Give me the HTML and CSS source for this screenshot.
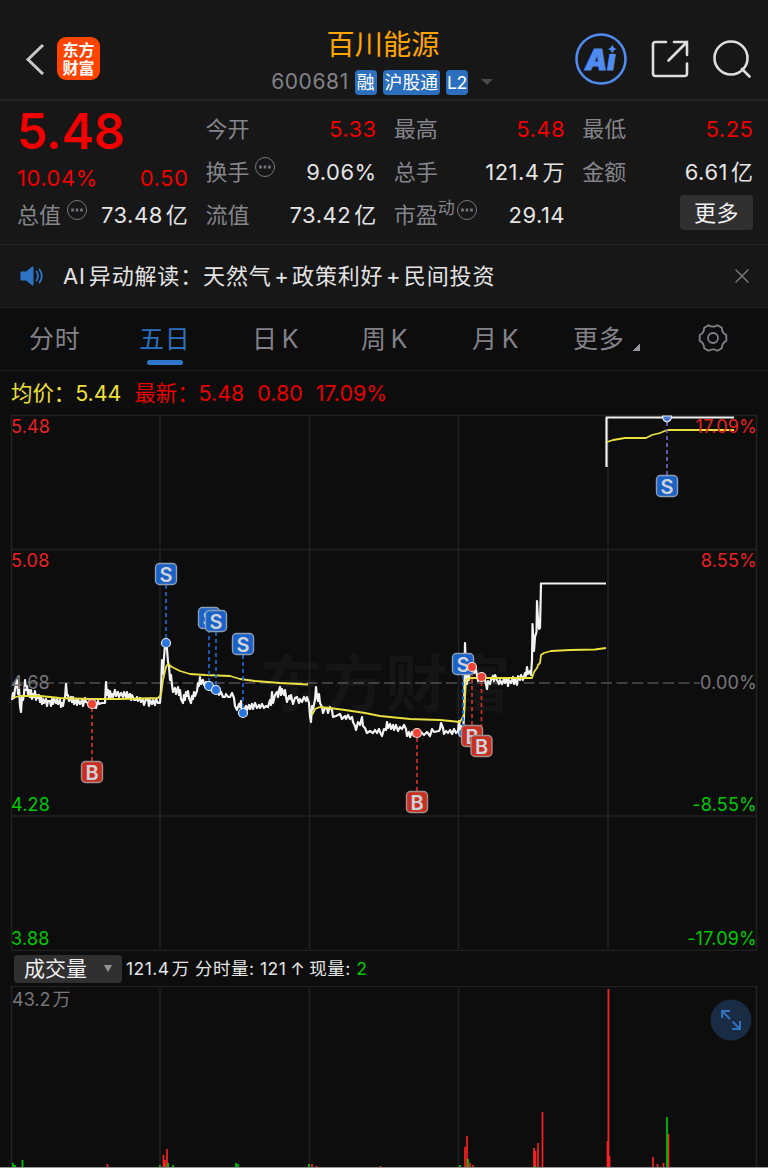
FILE: index.html
```html
<!DOCTYPE html>
<html lang="zh-Hans">
<head>
    <meta charset="UTF-8">
    <meta name="viewport" content="width=device-width, initial-scale=1.0">
    <title>百川能源 600681</title>
    <link rel="stylesheet" href="styles.css">
</head>
<body>
    <header>
        <div class="nav-left">
            <svg class="back" width="20" height="32" viewBox="0 0 20 32"><path d="M18 2 3 16.500 18 31"/></svg>
            <div class="logo"><span>东方</span><span>财富</span></div>
        </div>
        <div class="title">
            <h1>百川能源</h1>
            <div class="code">
                <span class="number">600681</span>
                <span class="tag">融</span>
                <span class="tag">沪股通</span>
                <span class="tag tag-l2">L2</span>
                <i class="caret"></i>
            </div>
        </div>
        <div class="nav-right">
            <svg width="52" height="52" viewBox="0 0 52 52">
                <circle cx="26" cy="26" r="24.500" fill="none" stroke="#508cf0" stroke-width="2.600"/>
                <text class="ai" x="10" y="36.500">Ai</text>
                <path d="M33 13h9v7.800h-9z" fill="#171717"/>
                <path d="M37.300 11.500q.9 3.800 4.700 4.500-3.800.8-4.700 4.600-.9-3.800-4.700-4.600 3.800-.7 4.700-4.500z" fill="#508cf0"/>
            </svg>
            <svg class="line-icon" width="38" height="38" viewBox="0 0 38 38"><path d="M15 2H4.500Q2 2 2 4.500v29Q2 36 4.500 36h29q2.500 0 2.500-2.500V23.500M23 2h13v13M36 2 17.500 20.500"/></svg>
            <svg class="line-icon" width="38" height="38" viewBox="0 0 38 38"><circle cx="18" cy="18" r="16.500"/><path d="M29 29l7.500 7.500"/></svg>
        </div>
    </header>

    <section class="quote">
        <div class="column">
            <strong class="price">5.48</strong>
            <div class="row change"><span>10.04%</span><span>0.50</span></div>
            <div class="row"><label>总值<i class="more-dot"></i></label><span>73.48<b>亿</b></span></div>
        </div>
        <div class="column">
            <div class="row"><label>今开</label><span class="up">5.33</span></div>
            <div class="row"><label>换手<i class="more-dot"></i></label><span>9.06%</span></div>
            <div class="row"><label>流值</label><span>73.42<b>亿</b></span></div>
        </div>
        <div class="column">
            <div class="row"><label>最高</label><span class="up">5.48</span></div>
            <div class="row"><label>总手</label><span>121.4<b>万</b></span></div>
            <div class="row"><label>市盈<sup>动</sup><i class="more-dot tight"></i></label><span>29.14</span></div>
        </div>
        <div class="column">
            <div class="row"><label>最低</label><span class="up">5.25</span></div>
            <div class="row"><label>金额</label><span>6.61<b>亿</b></span></div>
            <div class="row last"><button class="more-button">更多</button></div>
        </div>
    </section>

    <section class="notice">
        <svg width="24" height="20" viewBox="0 0 24 20">
            <path d="M1.500 5.500H6L12 .8q1.500-.8 1.500 1v16.400q0 1.800-1.500 1L6 14.500H1.500Q.5 14.500.5 13.500v-7q0-1 1-1z" fill="#2f74c4"/>
            <path d="M16.500 5.500q3 4.500 0 9M19.500 3.500q4.500 6.500 0 13" fill="none" stroke="#2f74c4" stroke-width="1.800" stroke-linecap="round"/>
        </svg>
        <p>AI<b>异动解读：</b>天然气<em>+</em>政策利好<em>+</em>民间投资</p>
        <svg class="close" width="14" height="14" viewBox="0 0 14 14"><path d="M.5.5l13 13M13.500.5l-13 13"/></svg>
    </section>

    <nav class="tabs">
        <a>分时</a>
        <a class="active">五日</a>
        <a>日<span>K</span></a>
        <a>周<span>K</span></a>
        <a>月<span>K</span></a>
        <a class="more">更多<i></i></a>
        <svg width="30" height="30" viewBox="0 0 30 30">
            <path d="M10.500 2.200c3 2 6 2 9 0l4.300 2.500c.1 3.500 1.400 6 4.500 7.400v5.800c-3.100 1.400-4.400 3.900-4.500 7.400l-4.300 2.500c-3-2-6-2-9 0l-4.300-2.500c-.1-3.500-1.400-6-4.500-7.400v-5.800c3.100-1.400 4.400-3.900 4.500-7.400z"/>
            <circle cx="15" cy="15" r="5"/>
        </svg>
    </nav>

    <div class="legend">
        <span class="average">均价：<b>5.44</b></span>
        <span class="latest">最新：<b>5.48</b><b>0.80</b><b>17.09%</b></span>
    </div>

    <svg class="chart" width="768" height="537" viewBox="0 414 768 537">
        <defs>
            <g id="sell"><rect x="-10.500" y="-10.500" width="21" height="21" rx="4" fill="#1a62c8" stroke="#8d9db4" stroke-width="1.400"/><text class="mark" y="7.500">S</text></g>
            <g id="buy"><rect x="-10.500" y="-10.500" width="21" height="21" rx="4" fill="#c83023" stroke="#a48e8b" stroke-width="1.400"/><text class="mark" y="7.500">B</text></g>
            <circle id="sell-dot" r="4.500" fill="#2b75df" stroke="#e4ecf8" stroke-width="1.200"/>
            <circle id="buy-dot" r="4.500" fill="#ee4232" stroke="#f8dddd" stroke-width="1.200"/>
        </defs>
        <text class="watermark" x="260" y="707">东方财富</text>
        <g class="grid">
            <path d="M11.500 415.500H756.500V950.500H11.500zM11 549.500H757M11 816H757"/>
            <path d="M160 417V949M309.500 417V949M458.500 417V949M608 417V949"/>
        </g>
        <path class="zero" d="M12 683H700"/>

        <path class="price-line" d="M12 700 13 693 14 698 15 689 17 680 18 694 19 688 20 706 21 712 22 697 23 700 24 694 25 680 26 690 27 686 28 694 29 690 30 697 31 690 32 699 33 694 34 697 35 691 36 700 37 695 38 698 39 695 40 702 41 697 42 704 43 699 44 703 46 699 47 706 48 701 50 701 51 706 52 699 53 704 54 699 56 703 57 698 58 704 60 700 61 707 62 703 63 706 64 700 65 698 66 684 67 695 68 695 69 701 71 697 72 702 73 697 74 704 76 700 77 705 78 699 79 702 80 704 82 700 83 706 84 702 85 698 86 702 88 703 92 704 94 707 96 708 97 704 98 701 99 704 102 703 105 703 106 682 107 695 108 690 109 699 110 691 111 697 112 694 113 697 114 693 115 690 116 696 118 692 119 697 121 693 123 697 124 692 126 697 127 692 128 698 130 694 131 700 132 695 134 700 136 700 137 697 138 701 140 698 141 702 143 700 144 705 146 699 148 700 149 706 150 700 152 704 153 700 155 705 156 699 158 703 160 703 161 690 162 660 163 674 164 658 165 645 166 641 167 649 168 662 169 666 170 680 171 675 172 685 173 692 175 688 176 694 178 687 179 695 180 690 181 699 183 703 184 695 185 700 186 692 187 696 188 691 189 698 191 703 192 696 193 699 194 692 195 696 197 691 198 683 199 686 200 677 201 684 203 680 204 685 206 682 207 687 209 685 211 690 213 687 215 691 217 689 219 695 221 692 223 697 225 697 226 694 228 697 230 697 232 693 234 698 235 706 237 710 239 704 240 707 241 701 242 712 244 710 246 706 247 710 249 705 250 709 252 704 253 709 255 703 257 708 259 705 260 708 262 704 264 708 266 706 268 707 270 700 271 705 272 692 273 703 275 695 277 692 278 697 279 690 280 687 281 695 282 689 284 695 285 690 286 697 287 702 289 696 290 699 291 695 292 700 293 704 295 698 297 697 299 703 300 699 302 702 304 697 306 701 307 697 309 703 310 716 311 722 312 706 313 709 315 700 316 687 317 696 318 701 319 694 320 703 322 707 323 713 325 708 327 708 328 713 330 707 332 710 333 717 336 716 340 714 342 719 345 716 346 719 348 715 350 719 352 717 353 722 355 726 356 730 358 722 360 725 362 717 363 726 365 728 367 733 370 731 373 733 375 730 377 733 379 729 380 732 382 736 384 729 386 730 387 722 388 728 390 724 391 729 393 725 394 730 396 725 398 731 400 727 402 729 404 725 406 729 407 736 409 732 410 737 412 732 414 736 416 733 419 736 421 732 424 735 427 732 430 736 432 729 434 732 439 731 440 729 441 723 443 728 444 734 446 731 448 733 450 730 452 734 454 729 456 733 458 731 459 721 460 729 461 726 463 734 464 715 465 643 466 670 467 684 468 670 469 680 470 665 472 667 474 673 476 670 478 681 480 677 482 680 484 676 486 684 487 689 488 681 490 684 491 680 493 676 494 681 495 675 497 680 499 684 500 680 502 684 504 679 505 683 507 678 508 686 509 680 511 683 513 677 514 684 515 679 517 685 518 676 520 680 521 675 523 680 525 673 526 676 527 667 528 674 530 671 531 675 532 660 532.500 624 534 651 535 637 536.500 632 537 601 538 620 539 629 540 628 541 583.500 606 583.500M606.500 467V417.500H734"/>
        <path class="avg" d="M12 698 20 696 40 696 60 698 90 699 120 699 158 698 161 695 163 680 166 667 168 664 172 667 180 671 190 674 205 675 230 676 240 679 255 681 280 683 308 684.500M312 715 315 709 320 707 330 708 345 710 365 713 380 716 410 719 440 720 460 722 464 715 466 680 470 678 500 678 532 678 534 672 537 668 538 665 540 663 541 655 544 653 551 651 570 650 595 649.500 606 648M607 442 613 440 625 438 646 438 652 435 660 433 667 430 734 430"/>

        <g class="sell-lines"><path d="M166 585V638M209 629V682M216 632V686M243 655V709M463 675V729"/><path d="M667 422V475" stroke="#7866c0"/></g>
        <path class="buy-lines" d="M92 708V761M417 738V791M472 672V726M481.500 682V735"/>
        <use href="#sell-dot" x="166" y="643"/><use href="#sell-dot" x="209" y="686"/><use href="#sell-dot" x="216" y="690"/><use href="#sell-dot" x="243" y="713"/>
        <use href="#sell-dot" x="463" y="733"/><path d="M662.500 416h9q0 5-4.500 6-4.500-1-4.500-6z" fill="#5078d0" stroke="#e4ecf8" stroke-width="1.200"/>
        <use href="#buy-dot" x="92" y="704"/><use href="#buy-dot" x="417" y="733"/>
        <use href="#sell" x="166" y="574"/><use href="#sell" x="209" y="618"/><use href="#sell" x="216" y="621"/><use href="#sell" x="243" y="644"/><use href="#sell" x="463" y="664"/><use href="#sell" x="667" y="486"/>
        <use href="#buy-dot" x="472" y="667"/><use href="#buy-dot" x="481.500" y="677"/>
        <use href="#buy" x="92" y="772"/><use href="#buy" x="417" y="802"/><use href="#buy" x="472" y="736"/><use href="#buy" x="481.500" y="746"/>

        <g class="axis">
            <text x="11" y="433" class="up">5.48</text>
            <text x="11" y="567" class="up">5.08</text>
            <text x="11" y="689">4.68</text>
            <text x="11" y="811" class="down">4.28</text>
            <text x="11" y="945" class="down">3.88</text>
        </g>
        <g class="axis right">
            <text x="757" y="433" class="up">17.09%</text>
            <text x="757" y="567" class="up">8.55%</text>
            <text x="757" y="689">0.00%</text>
            <text x="757" y="811" class="down">-8.55%</text>
            <text x="757" y="945" class="down">-17.09%</text>
        </g>
    </svg>

    <div class="volume-bar">
        <button>成交量<i></i></button>
        <p>121.4<b>万</b> 分时量: 121<b class="arrow">↑</b>现量: <span class="down">2</span></p>
    </div>

    <svg class="volume" width="768" height="182" viewBox="0 986 768 182">
        <g class="grid">
            <path d="M11.500 1168V986.500H756.500V1168"/>
            <path d="M160 989V1168M309.500 989V1168M458.500 989V1168M608 989V1168"/>
        </g>
        <path class="bars-up" d="M107.500 1168v-4M163.500 1168v-13M165 1168v-8M167 1168v-19M312 1168v-4M316.500 1168v-2M380.500 1168v-2M465 1168v-21M467 1168v-32M470 1168v-5M473 1168v-3M534 1168v-20M535.500 1168v-17M538 1168v-25M542.500 1168v-56M608.500 1168V989M609.500 1168v-12M607.500 1168v-27M653 1168v-11M657.500 1168v-4M663.500 1168v-5M668.500 1168v-34"/>
        <path class="bars-down" d="M13 1168v-5M15 1168v-3M22.500 1168v-8M160 1168v-3M168 1168v-5M173 1168v-3M236 1168v-5M238 1168v-4M309 1168v-4M460 1168v-3M468 1168v-9M535 1168v-2M667 1168v-51"/>
        <path d="M0 1167.500H768" stroke="#999"/>
        <text x="12" y="1006" class="max">43.2<tspan dx="2">万</tspan></text>
        <circle cx="731" cy="1020" r="20.500" fill="#192c43"/>
        <path class="expand" d="M722 1018v-7h8M722 1011l8 8M740 1021v8h-8M732.500 1021.500l7.500 7.500"/>
    </svg>
</body>
</html>
```

FILE: styles.css
```css
* {
    box-sizing: border-box;
}
body {
    margin: 0;
    width: 768px;
    height: 1168px;
    overflow: hidden;
    background: #0d0d0d;
    color: #e4e4e4;
    font-family: Inter, "Noto Sans CJK SC", sans-serif;
    font-size: 22px;
    font-weight: 400;
}
svg {
    display: block;
    flex: none;
}
b, em, i {
    font-weight: inherit;
    font-style: normal;
}
p, h1 {
    margin: 0;
}
.up {
    color: #f00000;
    fill: #e82222;
}
.down {
    color: #00c800;
    fill: #00c800;
}

/* 顶部导航 */
header {
    height: 101px;
    padding: 18px 17px 0 25px;
    display: grid;
    grid-template-columns: 175px 1fr 176px;
    background: #171717;
    border-bottom: 2px solid #242424;
}
.nav-left {
    display: flex;
    align-items: center;
    gap: 12px;
}
.back {
    fill: none;
    stroke: #c8c8c8;
    stroke-width: 3;
}
.logo {
    width: 43px;
    height: 43px;
    border-radius: 9px;
    background: #ff4400;
    color: #fff;
    display: flex;
    flex-direction: column;
    align-items: center;
    justify-content: center;
    font-size: 16px;
    font-weight: 700;
    line-height: 18px;
}
.title {
    margin-right: 9px;
    text-align: center;
}
.title h1 {
    color: #ffa500;
    font-size: 28.200px;
    font-weight: 400;
    line-height: 55px;
    height: 50px;
}
.code {
    display: flex;
    justify-content: center;
    align-items: center;
    gap: 6px;
    margin-right: 2px;
    line-height: 28px;
}
.number {
    color: #828288;
    font-size: 21px;
    letter-spacing: 0.600px;
}
.tag {
    height: 25px;
    padding: 0 2px;
    border-radius: 4px;
    background: #2c6fbf;
    color: #fff;
    font-size: 17.800px;
    line-height: 25px;
}
.tag-l2 {
    padding: 0 1px;
    letter-spacing: -0.500px;
}
.caret {
    margin-left: 7px;
    border: 6px solid transparent;
    border-top-color: #4a4a4c;
    border-bottom: 0;
}
.nav-right {
    display: flex;
    align-items: center;
    gap: 24px;
}
.line-icon {
    fill: none;
    stroke: #dedede;
    stroke-width: 2.6;
    stroke-linecap: round;
}
.ai {
    font-size: 28px;
    font-weight: 900;
    font-style: italic;
    fill: #508cf0;
    stroke: #508cf0;
    stroke-width: 0.8;
}

/* 行情数据 */
.quote {
    height: 144px;
    padding: 6px 15px 0 17px;
    display: grid;
    grid-template-columns: repeat(4, 1fr);
    column-gap: 17.600px;
    background: #171717;
    border-bottom: 1px solid #222;
}
.row {
    height: 43px;
    display: flex;
    justify-content: space-between;
    align-items: center;
    line-height: 26px;
    white-space: nowrap;
}
.row > span {
    margin-right: -0.500px;
    letter-spacing: 0.500px;
}
.row b {
    margin-left: 3px;
}
.row label {
    display: flex;
    align-items: center;
    color: #85858b;
}
.price {
    display: block;
    height: 53px;
    color: #f00000;
    font-size: 49px;
    font-weight: 600;
    line-height: 50px;
    letter-spacing: -0.300px;
}
.change {
    height: 33px;
    padding-top: 3px;
    color: #f00000;
}
.row sup {
    margin-bottom: 13px;
    font-size: 17px;
    line-height: 17px;
    vertical-align: baseline;
}
.more-dot {
    width: 20px;
    height: 20px;
    margin: 0 0 9px 6px;
    border: 1.500px solid #77777c;
    border-radius: 50%;
    background: radial-gradient(circle, #77777c 1.300px, transparent 1.600px) center / 4.500px 17px;
    background-clip: content-box;
    padding: 0 2px;
}
.more-dot.tight {
    margin-left: 2px;
}
.row.last {
    justify-content: flex-end;
}
.more-button {
    width: 73px;
    height: 35px;
    margin-bottom: 5px;
    padding: 0;
    border: 0;
    border-radius: 4px;
    background: #303030;
    color: #f0f0f0;
    font: inherit;
    letter-spacing: 0.500px;
    line-height: 36px;
}

/* 异动解读 */
.notice {
    height: 63px;
    padding: 0 19px 0 20px;
    display: flex;
    align-items: center;
    background: #171717;
    border-bottom: 1px solid #202020;
}
.notice p {
    flex: 1;
    margin-left: 19px;
    line-height: 26px;
    letter-spacing: 0.850px;
}
.notice b {
    margin-left: 3px;
}
.notice em {
    margin: 0 2.500px;
}
.close {
    stroke: #77777a;
    stroke-width: 1.500;
}

/* 周期切换 */
.tabs {
    height: 63px;
    padding-left: 29px;
    display: grid;
    grid-template-columns: 110px 113px 109px 111px 101px 125px 30px;
    border-bottom: 1px solid #1c1c1c;
    color: #828288;
    font-size: 25px;
    letter-spacing: 0.800px;
    line-height: 62px;
}
.tabs a {
    display: flex;
    position: relative;
}
.tabs span {
    margin-left: 4px;
}
.tabs .active {
    color: #2c70bf;
}
.tabs .active::after {
    content: "";
    position: absolute;
    left: 8px;
    top: 52px;
    width: 36px;
    height: 5px;
    border-radius: 3px;
    background: #2f77cb;
}
.tabs .more i {
    margin: 36px 0 0 8px;
    width: 7px;
    height: 7px;
    background: linear-gradient(135deg, transparent 50%, #96969b 50%);
}
.tabs svg {
    margin-top: 15px;
    fill: none;
    stroke: #828288;
    stroke-width: 1.800;
    stroke-linejoin: round;
}
.legend {
    height: 43px;
    padding-left: 11px;
    display: flex;
    gap: 13px;
    font-size: 21.400px;
    line-height: 44px;
}
.average {
    color: #eee03a;
}
.latest {
    color: #e60000;
}
.latest b + b {
    margin-left: 13px;
}

/* 走势图 */
.chart text, .volume text {
    font-size: 18px;
}
.grid {
    fill: none;
    stroke: #222;
    stroke-width: 1.500;
}
.chart .watermark {
    font-size: 62px;
    font-weight: 700;
    letter-spacing: 0.800px;
    fill: #151515;
}
.zero {
    stroke: #707070;
    stroke-width: 1.200;
    stroke-dasharray: 11 4.500;
}
.price-line, .avg {
    fill: none;
    stroke-width: 1.800;
    stroke-linejoin: round;
}
.price-line {
    stroke: #f2f2f2;
    stroke-width: 2.200;
}
.avg {
    stroke: #eae040;
}
.sell-lines, .buy-lines {
    stroke: #1d67cf;
    stroke-width: 1.700;
    stroke-dasharray: 4 3;
}
.buy-lines {
    stroke: #cc3325;
}
.chart .mark {
    font-size: 20px;
    font-weight: 600;
    text-anchor: middle;
    fill: #d0d4da;
}
.axis {
    fill: #77777b;
    letter-spacing: 0.200px;
}
.right {
    text-anchor: end;
}

/* 成交量 */
.volume-bar {
    height: 35px;
    padding: 4px 14px;
    display: flex;
    align-items: center;
    gap: 4px;
}
.volume-bar button {
    width: 108px;
    height: 28px;
    padding: 0 10px;
    display: flex;
    align-items: center;
    justify-content: space-between;
    border: 0;
    border-radius: 4px;
    background: #303030;
    color: #eee;
    font: inherit;
    font-size: 21px;
    line-height: 28px;
}
.volume-bar i {
    border: 4px solid transparent;
    border-top: 7px solid #929297;
    border-bottom: 0;
}
.volume-bar p {
    font-size: 17.500px;
    letter-spacing: 0.480px;
    line-height: 26px;
    white-space: pre;
}
.volume-bar b {
    margin-left: 2px;
}
.volume-bar .arrow {
    margin: 0 4px;
}
.bars-up, .bars-down {
    stroke: #f82222;
    stroke-width: 1.700;
}
.bars-down {
    stroke: #00c800;
}
.max {
    fill: #77777b;
}
.expand {
    fill: none;
    stroke: #3272c0;
    stroke-width: 2;
}
```
